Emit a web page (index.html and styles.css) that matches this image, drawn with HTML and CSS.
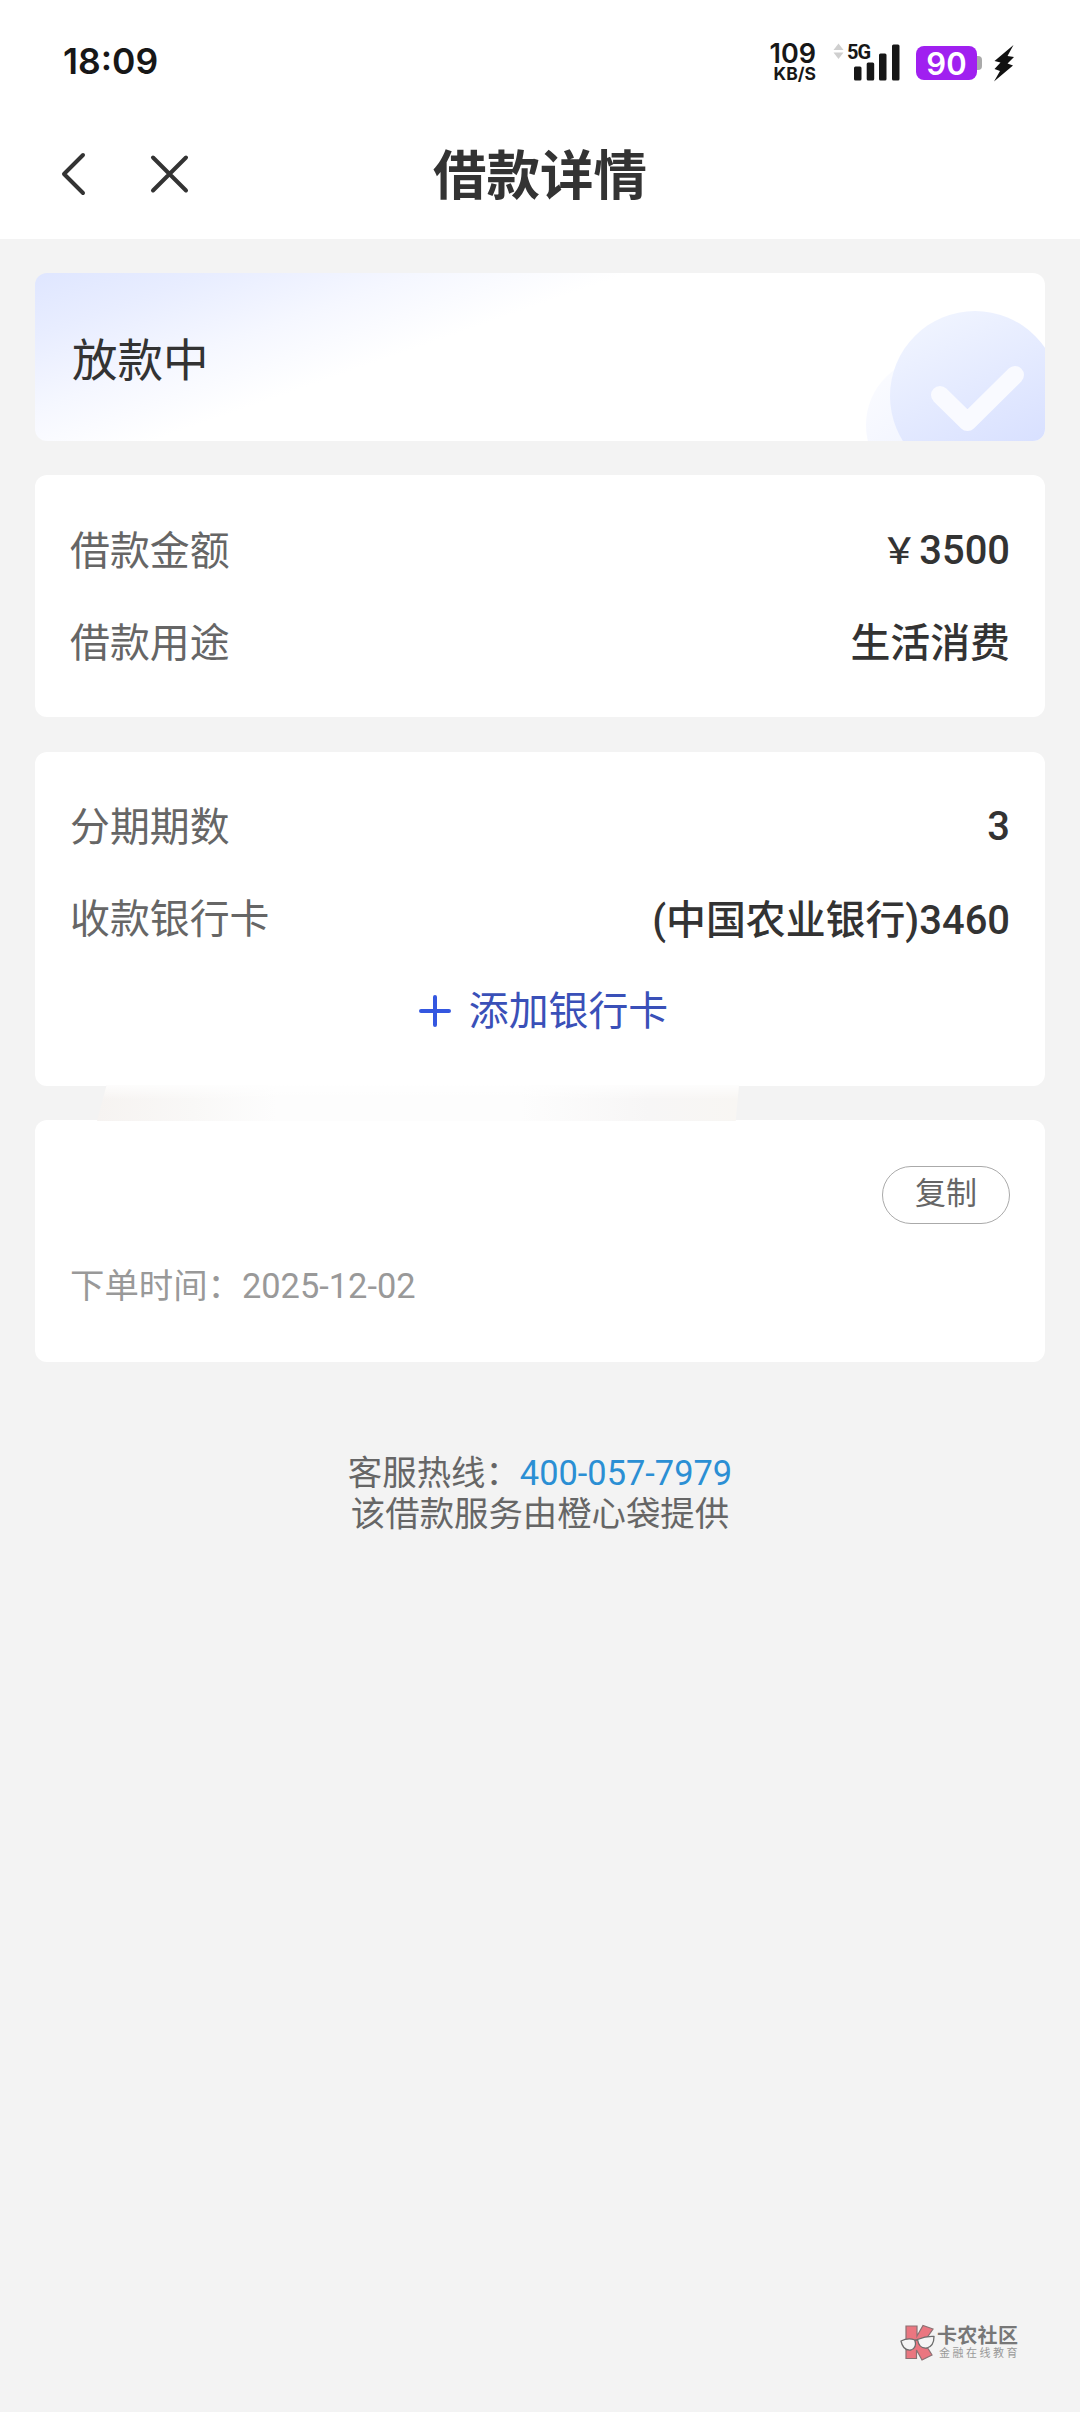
FILE: index.html
```html
<!DOCTYPE html>
<html lang="zh-CN">
<head>
<meta charset="utf-8">
<title>借款详情</title>
<link rel="stylesheet" href="styles.css">
</head>
<body>
<div class="page">
  <header class="header">
    <div class="status">
      <span class="time">18:09</span>
      <div class="status-right">
        <div class="speed"><span class="speed-num">109</span><span class="speed-unit">KB/S</span></div>
        <div class="signal">
          <svg class="signal-icon" width="68" height="40" viewBox="0 0 68 40">
            <g fill="#cfcfcf"><path d="M0.500 8L5.500 1.500L10.500 8Z"/><path d="M0.500 10.500L5.500 17L10.500 10.500Z"/></g>
            <g fill="#171717"><rect x="21" y="24.500" width="7.500" height="14" rx="1.500"/><rect x="33.700" y="20.500" width="7.500" height="18" rx="1.500"/><rect x="46" y="11.500" width="7.500" height="27" rx="1.500"/><rect x="59" y="2.500" width="7.500" height="36" rx="1.500"/></g>
          </svg>
          <span class="net">5G</span>
        </div>
        <div class="battery"><span class="battery-level">90</span><i class="battery-tip"></i></div>
        <svg class="bolt" width="22" height="38" viewBox="0 0 22 38"><path d="M20.500 1L1.500 17L7.500 18.500L1.500 25L7 27L1 37.500L20 21.500L14.500 19.500L21 13L14.500 12Z" fill="#111"/></svg>
      </div>
    </div>
    <nav class="nav">
      <div class="nav-icons">
        <svg width="26" height="46" viewBox="0 0 26 46"><path d="M22 4L3 23L22 42" fill="none" stroke="#333" stroke-width="4" stroke-linecap="round" stroke-linejoin="round"/></svg>
        <svg width="40" height="40" viewBox="0 0 40 40"><path d="M4 3.500L37 36.500M37 3.500L4 36.500" fill="none" stroke="#333" stroke-width="4" stroke-linecap="round"/></svg>
      </div>
      <h1 class="title">借款详情</h1>
      <div></div>
    </nav>
  </header>

  <main class="content">
    <section class="card state">
      <span class="state-text">放款中</span>
      <svg class="state-art" width="190" height="168" viewBox="0 0 190 168">
        <defs>
          <linearGradient id="big" x1="0.2" y1="0" x2="0.65" y2="0.9"><stop offset="0" stop-color="#f1f5ff"/><stop offset="1" stop-color="#d8e0ff"/></linearGradient>
          <linearGradient id="small" x1="0" y1="0.2" x2="0.6" y2="1"><stop offset="0" stop-color="#fafbff"/><stop offset="1" stop-color="#edf1ff"/></linearGradient>
        </defs>
        <circle cx="79" cy="152" r="68" fill="url(#small)"/>
        <circle cx="120" cy="123" r="85" fill="url(#big)"/>
        <path d="M85 122L112.500 149L160 102" fill="none" stroke="#f9faff" stroke-width="18" stroke-linecap="round" stroke-linejoin="round"/>
      </svg>
    </section>

    <section class="card">
      <div class="row"><span class="label">借款金额</span><span class="value"><span class="yen">￥</span>3500</span></div>
      <div class="row"><span class="label">借款用途</span><span class="value">生活消费</span></div>
    </section>

    <section class="card">
      <div class="row"><span class="label">分期期数</span><span class="value count">3</span></div>
      <div class="row"><span class="label">收款银行卡</span><span class="value">(中国农业银行)3460</span></div>
      <div class="row add">
        <svg width="34" height="34" viewBox="0 0 34 34"><path d="M17 3V31M3 17H31" fill="none" stroke="#3457e0" stroke-width="4" stroke-linecap="round"/></svg>
        <span>添加银行卡</span>
      </div>
    </section>

    <section class="card">
      <div class="smudge"></div>
      <div class="row order-row"><button class="copy">复制</button></div>
      <div class="row date">下单时间：2025-12-02</div>
    </section>

    <footer class="support">
      <div>客服热线：<a class="phone">400-057-7979</a></div>
      <div>该借款服务由橙心袋提供</div>
    </footer>
  </main>

  <div class="brand">
    <svg width="36" height="38" viewBox="0 0 36 38">
      <path d="M6 2H17L17 12L23 1.500L33 5L24 18L32 31L22 36L16.500 26V34.500H6Z" fill="#ea7680" stroke="#8b7173" stroke-width="1.200"/>
      <path d="M1 17Q8 13.500 15 16Q17 24 11 26Q3 27 1 17ZM17.500 15.500Q26 12 34 12.500Q34 22 27 24Q19 25 17.500 15.500ZM14 16.500L18 15.500" fill="#f5f5f5" stroke="#6d6d6d" stroke-width="1.300"/>
    </svg>
    <div class="brand-text"><span class="brand-name">卡农社区</span><span class="brand-sub">金融在线教育</span></div>
  </div>
</div>
</body>
</html>
```
FILE: styles.css
```css
* { box-sizing: border-box; }
body {
  margin: 0;
  background: #f3f3f3;
  font-family: Roboto, "Noto Sans CJK SC", sans-serif;
  color: #333;
}
.page {
  width: 1080px;
  height: 2412px;
  display: flex;
  flex-direction: column;
  overflow: hidden;
}
.header { height: 239px; background: #fff; flex: none; }

/* status bar */
.status {
  height: 110px;
  padding: 14px 65px 0 63px;
  display: flex;
  align-items: center;
  justify-content: space-between;
  font-family: Inter, sans-serif;
  color: #171717;
}
.time { font-size: 35.500px; line-height: 40px; font-weight: 600; }
.status-right { display: flex; align-items: center; }
.speed {
  display: flex;
  flex-direction: column;
  align-items: flex-end;
  font-weight: 600;
  margin-right: 17px;
}
.speed-num { font-size: 27px; line-height: 22px; padding-top: 1px; }
.speed-unit { font-size: 17.500px; line-height: 17px; font-weight: 700; }
.signal { position: relative; height: 40px; margin-right: 15px; }
.signal-icon { display: block; }
.net {
  position: absolute;
  left: 14px;
  top: 0;
  font: 700 20px/20px Roboto, sans-serif;
  letter-spacing: -1px;
}
.battery { display: flex; align-items: center; margin-right: 11px; padding-top: 2px; }
.battery-level {
  width: 61px;
  height: 34px;
  border-radius: 8px;
  background: #a020f0;
  color: #fff;
  font-size: 31px;
  font-weight: 600;
  line-height: 35px;
  text-align: center;
}
.battery-tip { width: 5px; height: 14px; background: #aaa; border-radius: 0 4px 4px 0; }
.bolt { display: block; margin-top: 1px; }

/* navigation */
.nav {
  height: 129px;
  padding: 0 61px;
  display: grid;
  grid-template-columns: 1fr auto 1fr;
  align-items: center;
}
.nav-icons { display: flex; align-items: center; gap: 62px; padding-bottom: 1px; }
.title { margin: 0; padding-top: 5px; font-size: 53.500px; font-weight: 700; line-height: 80px; }

/* cards */
.content {
  padding: 34.400px 35px 0;
  display: flex;
  flex-direction: column;
  gap: 34.400px;
}
.card {
  position: relative;
  background: #fff;
  border-radius: 12px;
  padding: 29px 35px;
}
.state {
  height: 167.400px;
  padding: 0 0 0 37px;
  display: flex;
  align-items: center;
  justify-content: space-between;
  overflow: hidden;
  background: linear-gradient(160.600deg, #dfe6ff 0%, #e8edff 12%, #f5f7ff 26%, #fff 40%);
}
.state-text { font-size: 45.500px; }
.row {
  height: 92px;
  display: flex;
  align-items: center;
  justify-content: space-between;
  font-size: 39.900px;
}
.label { color: #666; padding-bottom: 6px; }
.value { font-weight: 500; padding-bottom: 5px; }
.count { padding-bottom: 1px; }
.yen { font-size: 36px; margin-right: 2px; }
.add { justify-content: center; gap: 17px; padding-left: 6px; color: #3a50b8; }
.add span { padding-bottom: 6px; }
.order-row { justify-content: flex-end; }
.copy {
  width: 128px;
  height: 58px;
  padding: 0 0 2px;
  border: 1px solid #aaa;
  border-radius: 29px;
  background: #fff;
  color: #666;
  font: 400 31px/50px Roboto, "Noto Sans CJK SC", sans-serif;
}
.date { color: #999; font-size: 34.400px; padding-bottom: 8px; }
.smudge {
  position: absolute;
  left: 62px;
  top: -35px;
  width: 642px;
  height: 36px;
  clip-path: polygon(1.500% 0, 100% 0, 99.500% 100%, 0 100%);
  background:
    linear-gradient(180deg, rgba(255, 255, 255, 0.8), rgba(255, 255, 255, 0) 40%),
    linear-gradient(90deg, #f6f3f1 0, #f9f8f7 15%, #fdfdfd 28%, #fdfdfd 66%, #f7f6f6 86%, #f8f6f3 100%);
}

.support {
  margin-top: 57px;
  text-align: center;
  font-size: 34.400px;
  line-height: 41px;
  color: #666;
}
.phone { color: #2b8fd4; }

.brand {
  margin-top: auto;
  padding: 0 61px 50px 0;
  display: flex;
  align-items: center;
  justify-content: flex-end;
}
.brand-text { display: flex; flex-direction: column; width: 83px; padding: 1px 0 0 1px; }
.brand-name { font-size: 20px; line-height: 21px; letter-spacing: 0.300px; font-weight: 700; color: #777; white-space: nowrap; }
.brand-sub { font-size: 11px; line-height: 14px; letter-spacing: 2.500px; color: #999; white-space: nowrap; padding-left: 2px; }
```
